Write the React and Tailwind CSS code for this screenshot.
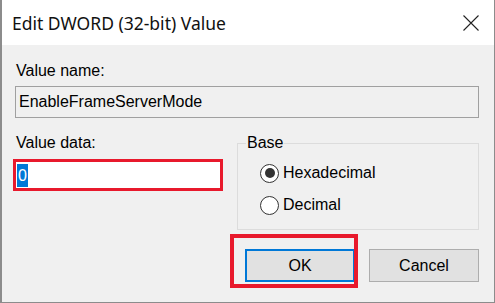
import React from 'react';

const Radio = ({ label, checked }) => {
  return (
    <div className="flex items-center h-[24px]">
      <span className="w-[19px] h-[19px] rounded-full border border-[#333] bg-white flex items-center justify-center">
        {checked && <span className="w-[10px] h-[10px] rounded-full bg-[#333]" />}
      </span>
      <span className="ml-[4px]">{label}</span>
    </div>
  );
};

export default function App() {
  return (
    <div className="w-[495px] h-[303px] flex flex-col border-l-2 border-r border-b border-[#8c8c8c] bg-[#f0f0f0] text-[16px] leading-[18px] text-black font-['Liberation_Sans',Arial,sans-serif]">
      {/* title bar */}
      <div className="h-[45px] shrink-0 bg-white flex items-center justify-between pl-[10px] pr-[15px]">
        <span className="text-[17.5px] pt-[1px] font-['Noto_Sans',sans-serif] text-[#111]">Edit DWORD (32-bit) Value</span>
        <svg width="16" height="16" viewBox="0 0 16 16" className="text-[#222]">
          <path d="M0.5 0.5 L15.5 15.5 M15.5 0.5 L0.5 15.5" stroke="currentColor" strokeWidth="1.1" fill="none" />
        </svg>
      </div>

      <div className="flex-1 pl-[13px] pr-[15px] pt-[17px]">
        <div className="ml-[1px]">Value name:</div>
        <div className="mt-[6px] h-[32px] border border-[#a0a0a0] bg-[#f0f0f0] px-[3px] flex items-center">
          EnableFrameServerMode
        </div>

        <div className="mt-[16px] flex items-start">
          <div className="w-[210px] -ml-[2px]">
            <div className="ml-[3px]">Value data:</div>
            <div className="mt-[7px] h-[32px] border-[3px] border-[#e8192c] bg-white pl-[1px] flex items-center">
              <span className="bg-[#0078d7] text-white leading-[23px] px-[1px]">0</span>
            </div>
          </div>

          <fieldset className="ml-auto w-[242px] h-[96px] border border-[#dcdcdc]">
            <legend className="ml-[8px] px-[1px]">Base</legend>
            <div className="pl-[22px] mt-[9px] flex flex-col gap-[8px]">
              <Radio label="Hexadecimal" checked />
              <Radio label="Decimal" />
            </div>
          </fieldset>
        </div>

        <div className="mt-[19px] flex justify-end gap-[14px]">
          <div className="relative">
            <button className="w-[110px] h-[33px] border-2 border-[#0078d7] bg-[#e1e1e1]">OK</button>
            <div className="absolute -left-[15px] -top-[15px] w-[128px] h-[54px] border-4 border-[#e8192c]" />
          </div>
          <button className="w-[110px] h-[33px] border border-[#adadad] bg-[#e1e1e1]">Cancel</button>
        </div>
      </div>
    </div>
  );
}
